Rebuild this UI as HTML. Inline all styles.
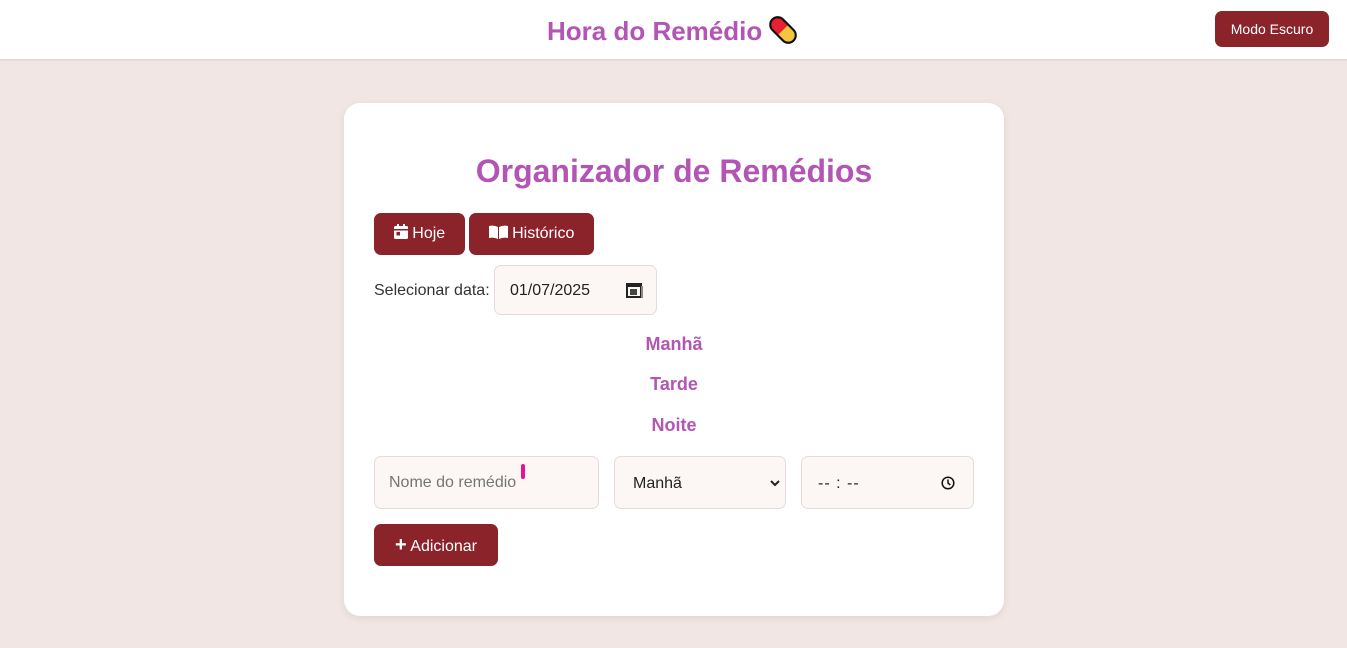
<!DOCTYPE html>
<html><head><meta charset="utf-8"><style>
*{box-sizing:border-box;margin:0;padding:0}
body{width:1347px;height:648px;background:#f1e6e4;font-family:"Liberation Sans",Arial,sans-serif;position:relative;overflow:hidden}
.top{position:absolute;left:0;top:0;width:1347px;height:61px;background:#fff;border-bottom:2px solid #e2dada}
.top h1{position:absolute;left:547px;top:16px;font-size:26px;color:#b355b5;font-weight:bold}
.dark{position:absolute;left:1215px;top:11px;width:114px;height:36px;background:#8b232b;color:#fff;border-radius:7px;font-size:14px;text-align:center;line-height:36px}
.card{position:absolute;left:344px;top:103px;width:660px;height:513px;background:#fff;border-radius:16px;box-shadow:0 2px 8px rgba(0,0,0,.08)}
.title{position:absolute;left:0;width:100%;top:50px;text-align:center;font-size:32px;color:#b355b5;font-weight:bold}
.btn{position:absolute;background:#8b232b;color:#fff;border-radius:7px;font-size:16px;line-height:42px;height:42px;text-align:center}
.lbl{position:absolute;font-size:16px;color:#333}
.in{position:absolute;background:#fcf7f5;border:1px solid #e5dcd9;border-radius:7px;font-size:16px;color:#222}
.sec{position:absolute;width:100%;text-align:center;font-size:18px;font-weight:bold;color:#b355b5}
</style></head><body>
<div class="top"><h1>Hora do Remédio</h1>
<svg width="32" height="32" viewBox="0 0 30 30" style="position:absolute;left:767px;top:14px"><g transform="rotate(-45 15 15)"><rect x="8" y="1" width="14" height="28" rx="7" fill="#f5c542"/><path d="M8 15V8a7 7 0 0 1 14 0v7z" fill="#e8202f"/><rect x="8" y="1" width="14" height="28" rx="7" fill="none" stroke="#111" stroke-width="2"/></g></svg>
<div class="dark">Modo Escuro</div></div>
<div class="card">
<div class="title">Organizador de Remédios</div>
<div class="btn" style="left:30px;top:110px;width:91px"><svg width="14" height="15" viewBox="0 0 14 15" style="vertical-align:-1px"><rect x="0" y="2" width="14" height="13" rx="1.5" fill="#fff"/><rect x="3" y="0" width="2" height="4" fill="#fff"/><rect x="9" y="0" width="2" height="4" fill="#fff"/><rect x="0" y="5" width="14" height="1.5" fill="#8b232b"/><rect x="2.5" y="8" width="3.5" height="3.5" fill="#8b232b"/></svg> Hoje</div>
<div class="btn" style="left:125px;top:110px;width:125px"><svg width="19" height="14" viewBox="0 0 19 14" style="vertical-align:-1px"><path d="M0 1Q5 0 9 2V14Q5 12 0 13Z M10 2Q14 0 19 1V13Q14 12 10 14Z" fill="#fff"/></svg> Histórico</div>
<div class="lbl" style="left:30px;top:179px">Selecionar data:</div>
<div class="in" style="left:150px;top:162px;width:163px;height:50px"><span style="position:absolute;left:15px;top:16px">01/07/2025</span><svg width="17" height="17" viewBox="0 0 17 17" style="position:absolute;left:131px;top:16px"><rect x="1" y="2" width="14" height="13" fill="none" stroke="#222" stroke-width="2"/><rect x="1" y="2" width="14" height="3" fill="#222"/><rect x="4" y="7" width="7" height="6" fill="#444"/><rect x="15" y="4" width="2" height="12" fill="#888"/></svg></div>
<div class="sec" style="top:231px">Manhã</div>
<div class="sec" style="top:271px">Tarde</div>
<div class="sec" style="top:312px">Noite</div>
<div class="in" style="left:30px;top:353px;width:225px;height:53px"><span style="position:absolute;left:14px;top:17px;color:#757575">Nome do remédio</span><span style="position:absolute;left:146px;top:7px;width:4px;height:15px;background:#e6158f;border-radius:2px"></span></div>
<div class="in" style="left:270px;top:353px;width:172px;height:53px"><span style="position:absolute;left:18px;top:18px">Manhã</span><svg width="10" height="7" viewBox="0 0 10 7" style="position:absolute;left:155px;top:23px"><path d="M1 1l4 4 4-4" fill="none" stroke="#222" stroke-width="2"/></svg></div>
<div class="in" style="left:457px;top:353px;width:173px;height:53px"><span style="position:absolute;left:16px;top:18px;letter-spacing:1px">-- : --</span><svg width="14" height="14" viewBox="0 0 14 14" style="position:absolute;left:139px;top:19px"><circle cx="7" cy="7" r="5.8" fill="none" stroke="#111" stroke-width="1.5"/><path d="M7 3.5V7l2.3 2" fill="none" stroke="#111" stroke-width="1.5"/></svg></div>
<div class="btn" style="left:30px;top:421px;width:124px"><b style="font-size:20px">+</b> Adicionar</div>
</div>
</body></html>
